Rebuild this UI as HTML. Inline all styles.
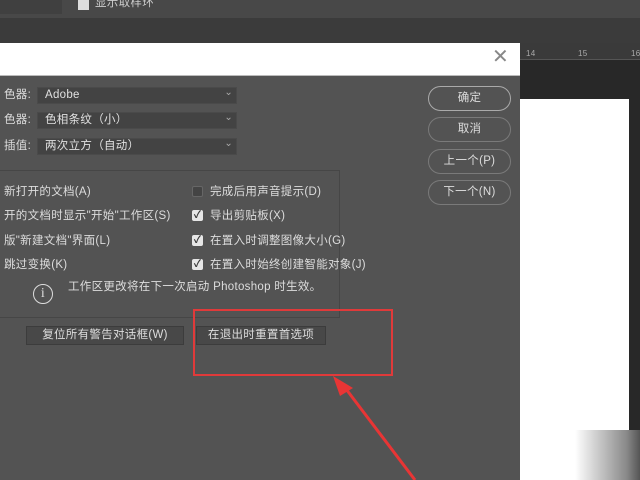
<!DOCTYPE html>
<html><head><meta charset="utf-8"><style>
*{margin:0;padding:0;box-sizing:border-box}
body{width:640px;height:480px;overflow:hidden;position:relative;background:#282828;font-family:"Liberation Sans","Noto Sans CJK SC",sans-serif;font-size:11.5px;color:#ddd;letter-spacing:0.3px}
.a{position:absolute}
.t{position:absolute;white-space:nowrap;line-height:14px}
.dd{position:absolute;left:37px;width:200px;height:17px;background:#434343;border:1px solid #4a4a4a;padding-left:7px;line-height:15px;color:#e0e0e0}
.dd:after{content:"⌄";position:absolute;right:3px;top:-3px;font-size:10px;color:#aaa}
.btn{position:absolute;left:428px;width:83px;height:25px;border:1.5px solid #7a7a7a;border-radius:13px;text-align:center;line-height:22px;color:#ddd}
.cb{position:absolute;left:192px;width:11px;height:11px;background:#e6e6e6;border-radius:2px;color:#333;font-size:10px;line-height:11px;text-align:center;font-weight:bold}
.pb{position:absolute;height:19px;background:#484848;border:1px solid #3c3c3c;text-align:center;line-height:17px;color:#ddd}
</style></head><body>
<div class="a" style="left:0;top:0;width:640px;height:18px;background:#484848"></div>
<div class="a" style="left:0;top:0;width:62px;height:14px;background:#404040"></div>
<div class="a" style="left:78px;top:0;width:11px;height:10px;background:#ddd"></div>
<div class="t" style="left:95px;top:-4px;color:#ccc">显示取样环</div>
<div class="a" style="left:0;top:18px;width:640px;height:25px;background:#3b3b3b"></div>
<div class="a" style="left:520px;top:43px;width:120px;height:17px;background:#3a3a3a;border-bottom:1px solid #555"></div>
<div class="t" style="left:526px;top:47px;font-size:8px;color:#aaa">14</div>
<div class="t" style="left:578px;top:47px;font-size:8px;color:#aaa">15</div>
<div class="t" style="left:631px;top:47px;font-size:8px;color:#aaa">16</div>
<div class="a" style="left:520px;top:99px;width:109px;height:381px;background:#fff"></div>
<div class="a" style="left:575px;top:430px;width:65px;height:50px;background:linear-gradient(90deg,#fff,#888 80%,#555)"></div>
<div class="a" style="left:0;top:43px;width:520px;height:437px;background:#535353"></div>
<div class="a" style="left:0;top:43px;width:520px;height:33px;background:#fff;border-bottom:1px solid #bbb"></div>
<div class="t" style="left:492px;top:50px;font-size:20px;color:#888;font-weight:300">✕</div>
<div class="t" style="left:4px;top:88px">色器:</div>
<div class="t" style="left:4px;top:113px">色器:</div>
<div class="t" style="left:4px;top:139px">插值:</div>
<div class="dd" style="top:87px">Adobe</div>
<div class="dd" style="top:112px">色相条纹（小）</div>
<div class="dd" style="top:138px">两次立方（自动）</div>
<div class="btn" style="top:86px;border-color:#aaa">确定</div>
<div class="btn" style="top:117px">取消</div>
<div class="btn" style="top:149px">上一个(P)</div>
<div class="btn" style="top:180px">下一个(N)</div>
<div class="a" style="left:0;top:170px;width:340px;height:148px;border:1px solid #464646;border-left:none"></div>
<div class="t" style="left:4px;top:185px">新打开的文档(A)</div>
<div class="t" style="left:4px;top:209px">开的文档时显示"开始"工作区(S)</div>
<div class="t" style="left:4px;top:234px">版"新建文档"界面(L)</div>
<div class="t" style="left:4px;top:258px">跳过变换(K)</div>
<div class="cb" style="top:186px;background:#444;border:1px solid #666"></div>
<div class="cb" style="top:210px">✓</div>
<div class="cb" style="top:235px">✓</div>
<div class="cb" style="top:259px">✓</div>
<div class="t" style="left:210px;top:185px">完成后用声音提示(D)</div>
<div class="t" style="left:210px;top:209px">导出剪贴板(X)</div>
<div class="t" style="left:210px;top:234px">在置入时调整图像大小(G)</div>
<div class="t" style="left:210px;top:258px">在置入时始终创建智能对象(J)</div>
<div class="a" style="left:33px;top:284px;width:20px;height:20px;border:1.5px solid #ddd;border-radius:50%;text-align:center;font-size:14px;line-height:17px;font-family:'Liberation Serif',serif">i</div>
<div class="t" style="left:68px;top:280px">工作区更改将在下一次启动 Photoshop 时生效。</div>
<div class="pb" style="left:26px;top:326px;width:158px">复位所有警告对话框(W)</div>
<div class="pb" style="left:196px;top:326px;width:130px">在退出时重置首选项</div>
<div class="a" style="left:193px;top:309px;width:200px;height:67px;border:2px solid #e03a3a"></div>
<svg class="a" style="left:0;top:0" width="640" height="480"><line x1="415" y1="480" x2="343" y2="385" stroke="#e83535" stroke-width="3"/><polygon points="333,376 353,388 340,396" fill="#e83535"/></svg>
</body></html>
